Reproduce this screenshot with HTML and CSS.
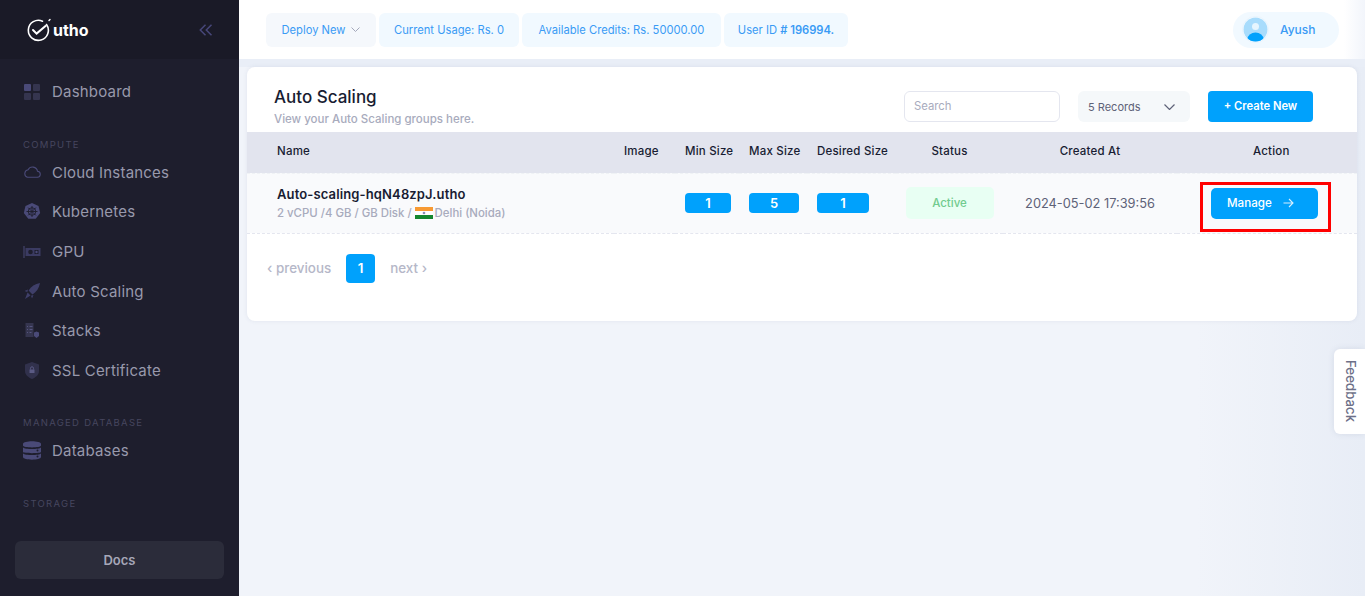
FILE: index.html
```html
<!DOCTYPE html>
<html lang="en">
<head>
    <meta charset="UTF-8">
    <meta name="viewport" content="width=device-width, initial-scale=1.0">
    <title>Auto Scaling</title>
    <link rel="stylesheet" href="styles.css">
</head>
<body>
    <aside class="sidebar">
        <div class="brand">
            <div class="logo">
                <svg width="26" height="24" viewBox="0 0 26 24" fill="none" stroke="#fff" stroke-linecap="round">
                    <path d="M20.5 6.5A10 10 0 1 1 16.5 3.2" stroke-width="1.6"/>
                    <path d="M7 12l3.6 3.6L19.5 8" stroke-width="2"/>
                    <path d="M23 2.5l1-1" stroke-width="1.4"/>
                </svg>
                <span>utho</span>
            </div>
            <svg class="collapse" width="14" height="12" viewBox="0 0 14 12" fill="none" stroke="#47477a" stroke-width="1.5">
                <path d="M6.5 .8L1.3 6l5.2 5.2"/>
                <path d="M12.5 .8L7.3 6l5.2 5.2"/>
            </svg>
        </div>
        <nav class="nav">
            <a class="nav-item nav-first">
                <svg width="16" height="16" viewBox="0 0 16 16" fill="#35354f"><rect width="7" height="7" rx="1" fill="#4a4a78"/><rect x="9" width="7" height="7" rx="1"/><rect y="9" width="7" height="7" rx="1"/><rect x="9" y="9" width="7" height="7" rx="1"/></svg>
                Dashboard
            </a>
            <div class="nav-label nav-label-first">COMPUTE</div>
            <a class="nav-item">
                <svg width="17" height="12" viewBox="0 0 17 12" fill="none" stroke="#4a4a78" stroke-width="1.1"><path d="M4 11.2h9.5a3 3 0 0 0 .5-6A5 5 0 0 0 4.600 3.800 3.800 3.800 0 0 0 4 11.200z"/></svg>
                Cloud Instances
            </a>
            <a class="nav-item">
                <svg width="17" height="17" viewBox="0 0 17 17"><path d="M8.500 0l6.500 3 1.700 7-4.500 5.800H4.800L.3 10 2 3z" fill="#4a4a78"/><g fill="none" stroke="#1e1e2d" stroke-width=".9"><circle cx="8.500" cy="8.500" r="3.800"/><path d="M8.500 3v11M3 8.500h11M4.600 4.600l7.800 7.800M12.400 4.600l-7.800 7.800"/></g></svg>
                Kubernetes
            </a>
            <a class="nav-item">
                <svg width="17" height="12" viewBox="0 0 17 12"><path d="M0 0h1v12H0z" fill="#4a4a78"/><path d="M2 2h15v8H2z" fill="#3b3b62"/><circle cx="7" cy="6" r="2.300" fill="#1e1e2d"/><path d="M11 4h4v4h-4z" fill="#1e1e2d"/><circle cx="13" cy="6" r="1.200" fill="#4a4a78"/></svg>
                GPU
            </a>
            <a class="nav-item">
                <svg width="16" height="16" viewBox="0 0 16 16" fill="#3f3f69"><path d="M16 0C11 .8 7 3.500 4.600 7.500l3.900 3.900C12.500 9 15.200 5 16 0z"/><path d="M4 6.500L.5 8l2.800 1zM9.500 12L8 15.500 7 12.700zM3.600 9.500l2.900 2.900L1 16z"/></svg>
                Auto Scaling
            </a>
            <a class="nav-item">
                <svg width="15" height="15" viewBox="0 0 15 15"><path d="M1 0h8v14H1z" fill="#35354f"/><path d="M2.500 3h1v1h-1zM5 3h3v1H5zM2.500 6h1v1h-1zM5 6h3v1H5zM2.500 9h1v1h-1zM5 9h2v1H5z" fill="#55557f"/><path d="M9.500 9.500l2.500-1 2.500 1V13l-2.500 2-2.500-2z" fill="#4a4a78"/></svg>
                Stacks
            </a>
            <a class="nav-item">
                <svg width="16" height="17" viewBox="0 0 16 17"><path d="M8 0l7 2.500V9c0 4-3.500 6.500-7 8-3.500-1.500-7-4-7-8V2.500z" fill="#31314c"/><path d="M5.500 7.500h5V11h-5z" fill="#5a5a84"/><path d="M6.500 7.500V6.300a1.500 1.500 0 0 1 3 0v1.200" fill="none" stroke="#5a5a84"/></svg>
                SSL Certificate
            </a>
            <div class="nav-label nav-label-gap">MANAGED DATABASE</div>
            <a class="nav-item">
                <svg width="18" height="19" viewBox="0 0 18 19" fill="#4a4a78"><path d="M0 3c0-3.600 18-3.600 18 0v1.500c0 2.500-18 2.500-18 0z"/><path d="M0 6.500c2 2 16 2 18 0V11c0 1.500-18 1.500-18 0z"/><path d="M0 12.500c2 2 16 2 18 0V16c0 3.500-18 3.500-18 0z"/><circle cx="14.500" cy="9.500" r="1" fill="#1e1e2d"/><circle cx="14.500" cy="15.500" r="1" fill="#1e1e2d"/></svg>
                Databases
            </a>
            <div class="nav-label nav-label-gap">STORAGE</div>
        </nav>
        <a class="docs">Docs</a>
    </aside>

    <div class="main">
        <header class="topbar">
            <div class="chip chip-deploy">Deploy New
                <svg width="9" height="5" viewBox="0 0 9 5" fill="none" stroke="#a4a8bb"><path d="M.5 .5l4 4 4-4"/></svg>
            </div>
            <div class="chip chip-usage">Current Usage: Rs. 0</div>
            <div class="chip chip-credits">Available Credits: Rs. 50000.00</div>
            <div class="chip chip-user"><span>User ID <b># 196994.</b></span></div>
            <div class="user">
                <svg width="27" height="27" viewBox="0 0 27 27">
                    <defs><clipPath id="av"><circle cx="13.500" cy="13.500" r="12"/></clipPath></defs>
                    <circle cx="13.500" cy="13.500" r="13" fill="#fff" stroke="#e6f3fe"/>
                    <g clip-path="url(#av)"><rect width="27" height="27" fill="#a8dcfc"/><circle cx="13.500" cy="10.500" r="3.500" fill="#e6f5fe"/><ellipse cx="13.500" cy="23" rx="8" ry="6.500" fill="#00a1fc"/></g>
                </svg>
                <span>Ayush</span>
            </div>
        </header>

        <section class="card">
            <div class="card-head">
                <div class="card-title">
                    <h2>Auto Scaling</h2>
                    <p>View your Auto Scaling groups here.</p>
                </div>
                <div class="search">Search</div>
                <div class="records">5 Records
                    <svg width="11" height="6" viewBox="0 0 11 6" fill="none" stroke="#5e6278" stroke-width="1.200"><path d="M.5 .5l5 5 5-5"/></svg>
                </div>
                <a class="create">+ Create New</a>
            </div>
            <table class="table">
                <colgroup>
                    <col class="col-name"><col class="col-image"><col class="col-min"><col class="col-max"><col class="col-desired"><col class="col-status"><col class="col-created"><col class="col-action">
                </colgroup>
                <thead>
                    <tr>
                        <th class="cell-name">Name</th>
                        <th>Image</th>
                        <th>Min Size</th>
                        <th>Max Size</th>
                        <th>Desired Size</th>
                        <th class="center">Status</th>
                        <th class="center">Created At</th>
                        <th class="cell-action">Action</th>
                    </tr>
                </thead>
                <tbody>
                    <tr>
                        <td class="cell-name">
                            <div class="row-title">Auto-scaling-hqN48zpJ.utho</div>
                            <div class="row-sub">2 vCPU /4 GB / GB Disk /
                                <svg class="flag" width="18" height="12" viewBox="0 0 18 12"><rect width="18" height="4" fill="#f79a33"/><rect y="4" width="18" height="4" fill="#fff"/><rect y="8" width="18" height="4" fill="#14872f"/><circle cx="9" cy="6" r="1.300" fill="#8a8fb8"/></svg>
                                Delhi (Noida)
                            </div>
                        </td>
                        <td></td>
                        <td><span class="size size-min">1</span></td>
                        <td><span class="size size-max">5</span></td>
                        <td><span class="size size-desired">1</span></td>
                        <td class="center"><span class="status">Active</span></td>
                        <td class="center created">2024-05-02 17:39:56</td>
                        <td>
                            <a class="manage">Manage
                                <svg width="11" height="10" viewBox="0 0 11 10" fill="none" stroke="#d5eefe" stroke-width="1.100"><path d="M.5 5h9.500M6 1l4 4-4 4"/></svg>
                            </a>
                        </td>
                    </tr>
                </tbody>
            </table>
            <div class="pager">
                <span>‹ previous</span>
                <b class="page">1</b>
                <span>next ›</span>
            </div>
        </section>
    </div>

    <div class="highlight"></div>
    <div class="feedback"><span>Feedback</span></div>
</body>
</html>
```

FILE: styles.css
```css
:root {
    --primary-color: #00a1fc;
    --side-color: #1e1e2d;
    --side-text: #9899ac;
    --muted-color: #a8abbd;
    --text-color: #181c32;
}
* {
    box-sizing: border-box;
}
body {
    font-family: 'Inter', sans-serif;
    display: flex;
    height: 100vh;
    margin: 0;
    overflow: hidden;
    background-color: #f1f4fa;
    color: var(--text-color);
}
.sidebar {
    width: 239px;
    flex-shrink: 0;
    display: flex;
    flex-direction: column;
    background-color: var(--side-color);
    color: var(--side-text);
}
.brand {
    height: 59px;
    display: flex;
    align-items: center;
    justify-content: space-between;
    padding: 0 26px 0 26px;
    background-color: #1a1a27;
}
.logo {
    display: flex;
    align-items: center;
    gap: 1px;
    color: #fff;
    font-size: 16px;
    font-weight: 700;
}
.nav {
    flex: 1;
    padding-top: 13px;
}
.nav-item {
    height: 39.6px;
    display: flex;
    align-items: center;
    font-size: 15px;
    letter-spacing: 0.2px;
}
.nav-item svg {
    width: 18px;
    margin: 0 11px 0 23px;
}
.nav-label {
    height: 12px;
    line-height: 12px;
    margin: 27px 0 2px 23px;
    color: #46465f;
    font-size: 9.5px;
    letter-spacing: 1.3px;
}
.docs {
    height: 38px;
    margin: 0 15px 17px;
    display: flex;
    align-items: center;
    justify-content: center;
    border-radius: 6px;
    background-color: #2b2c3a;
    color: #a6a7b8;
    font-size: 13px;
    font-weight: 600;
}
.main {
    flex: 1;
    min-width: 0;
    /* darker strip under the top bar, then a soft fade down the right edge */
    background:
        linear-gradient(#e9eef7, #e9eef7) 0 0 / 100% 67px no-repeat,
        linear-gradient(to right, rgba(232, 237, 246, 0) 85%, #e8edf6 100%);
}
.topbar {
    height: 59px;
    display: flex;
    align-items: center;
    gap: 3px;
    padding: 0 26px 0 27px;
    background: linear-gradient(to right, #fff 1105px, #f2f5fb 100%);
}
.chip {
    height: 34px;
    display: flex;
    align-items: center;
    gap: 6px;
    justify-content: center;
    border-radius: 6px;
    background-color: #f1f9ff;
    color: #3a9bf5;
    font-size: 11.2px;
}
.chip b {
    font-weight: 600;
}
.chip-deploy {
    width: 110px;
    background-color: #f5f8fc;
}
.chip-usage { width: 140px; }
.chip-credits { width: 199px; }
.chip-user { width: 124px; }
.user {
    width: 106px;
    height: 36px;
    margin-left: auto;
    display: flex;
    align-items: center;
    gap: 11px;
    padding-left: 9px;
    border-radius: 18px;
    background-color: #f1f9ff;
    color: #3a9bf5;
    font-size: 12px;
    font-weight: 500;
}
.card {
    width: 1110px;
    height: 254px;
    margin: 8px 0 0 8px;
    border-radius: 8px;
    background-color: #fff;
    overflow: hidden;
    box-shadow: 0 0 4px rgba(76, 87, 125, 0.1);
}
.card-head {
    height: 65px;
    display: flex;
    align-items: flex-start;
    padding: 24px 44px 0 27px;
}
.card-title {
    flex: 1;
    margin-top: -5px;
}
h2 {
    margin: 0;
    font-size: 17px;
    line-height: 22px;
    font-weight: 500;
}
.card-title p {
    margin: 4px 0 0;
    color: var(--muted-color);
    font-size: 11.5px;
    line-height: 14px;
    font-weight: 500;
}
.search {
    width: 156px;
    height: 31px;
    margin-right: 18px;
    padding-left: 9px;
    line-height: 29px;
    border: 1px solid #e4e6ef;
    border-radius: 6px;
    color: var(--muted-color);
    font-size: 11.3px;
}
.records {
    width: 112px;
    height: 31px;
    margin-right: 18px;
    display: flex;
    align-items: center;
    justify-content: space-between;
    padding: 0 15px 0 10px;
    border-radius: 6px;
    background-color: #f5f8fa;
    color: #5e6278;
    font-size: 11px;
}
.create {
    width: 105px;
    height: 31px;
    line-height: 31px;
    text-align: center;
    border-radius: 4px;
    background-color: var(--primary-color);
    color: #fff;
    font-size: 11.2px;
    font-weight: 600;
}
.table {
    width: 1110px;
    table-layout: fixed;
    border-collapse: collapse;
}
.col-name { width: 367px; }
.col-image { width: 61px; }
.col-min { width: 64px; }
.col-max { width: 68px; }
.col-desired { width: 89px; }
.col-status { width: 107px; }
.col-created { width: 174px; }
.col-action { width: 180px; }
th {
    height: 41px;
    padding: 0 0 3px 10px;
    background-color: #e2e4ee;
    border-bottom: 1px dashed #eff2f5;
    text-align: left;
    font-size: 11.5px;
    font-weight: 500;
    letter-spacing: 0.2px;
}
td {
    height: 60px;
    padding: 0 0 0 10px;
    background-color: #f9fafc;
    border-bottom: 1px dashed #e4e6ef;
}
th.center {
    padding: 0 0 3px;
    text-align: center;
}
td.center {
    padding: 0;
    text-align: center;
}
.cell-name {
    padding-left: 30px;
}
th.cell-action {
    padding-left: 76px;
}
.row-title {
    font-size: 13px;
    font-weight: 600;
    line-height: 18px;
    letter-spacing: 0.13px;
}
.row-sub {
    display: flex;
    align-items: center;
    gap: 2px;
    margin-top: 2px;
    color: var(--muted-color);
    font-size: 11.4px;
    font-weight: 500;
    line-height: 16px;
}
.flag {
    margin: 0 0 0 1px;
}
.size {
    display: block;
    height: 20px;
    line-height: 20px;
    text-align: center;
    border-radius: 4px;
    background-color: var(--primary-color);
    color: #fff;
    font-size: 13px;
    font-weight: 600;
}
.size-min { width: 46px; }
.size-max { width: 50px; }
.size-desired { width: 52px; }
.status {
    display: block;
    width: 88px;
    height: 32px;
    margin: 0 auto;
    line-height: 32px;
    border-radius: 5px;
    background-color: #e8fff3;
    color: #71cb8e;
    font-size: 11.5px;
    font-weight: 500;
}
.created {
    color: #5e6278;
    font-size: 12.8px;
}
.manage {
    width: 107px;
    height: 31px;
    margin-left: 24px;
    display: flex;
    align-items: center;
    gap: 11px;
    padding-left: 16px;
    border-radius: 5px;
    background-color: var(--primary-color);
    color: #fff;
    font-size: 11.6px;
    font-weight: 500;
}
.pager {
    display: flex;
    align-items: center;
    margin: 20px 0 0 20px;
    color: #b5b7c8;
    font-size: 13.4px;
    font-weight: 500;
}
.page {
    width: 29px;
    height: 29px;
    margin: 0 15px;
    line-height: 29px;
    text-align: center;
    border-radius: 4px;
    background-color: var(--primary-color);
    color: #fff;
    font-weight: 600;
}
/* red marker from the screenshot, sits over the row */
.highlight {
    position: absolute;
    left: 1200px;
    top: 182px;
    width: 131px;
    height: 50px;
    border: 3px solid #f00;
}
.feedback {
    position: absolute;
    right: 0;
    top: 349px;
    width: 31px;
    height: 85px;
    display: flex;
    align-items: center;
    justify-content: center;
    padding-left: 3px;
    border-radius: 6px 0 0 6px;
    background-color: #fff;
    color: #6d7088;
    font-size: 13.3px;
    font-weight: 500;
    box-shadow: 0 0 6px rgba(76, 87, 125, 0.12);
}
.feedback span {
    writing-mode: vertical-rl;
}
```
